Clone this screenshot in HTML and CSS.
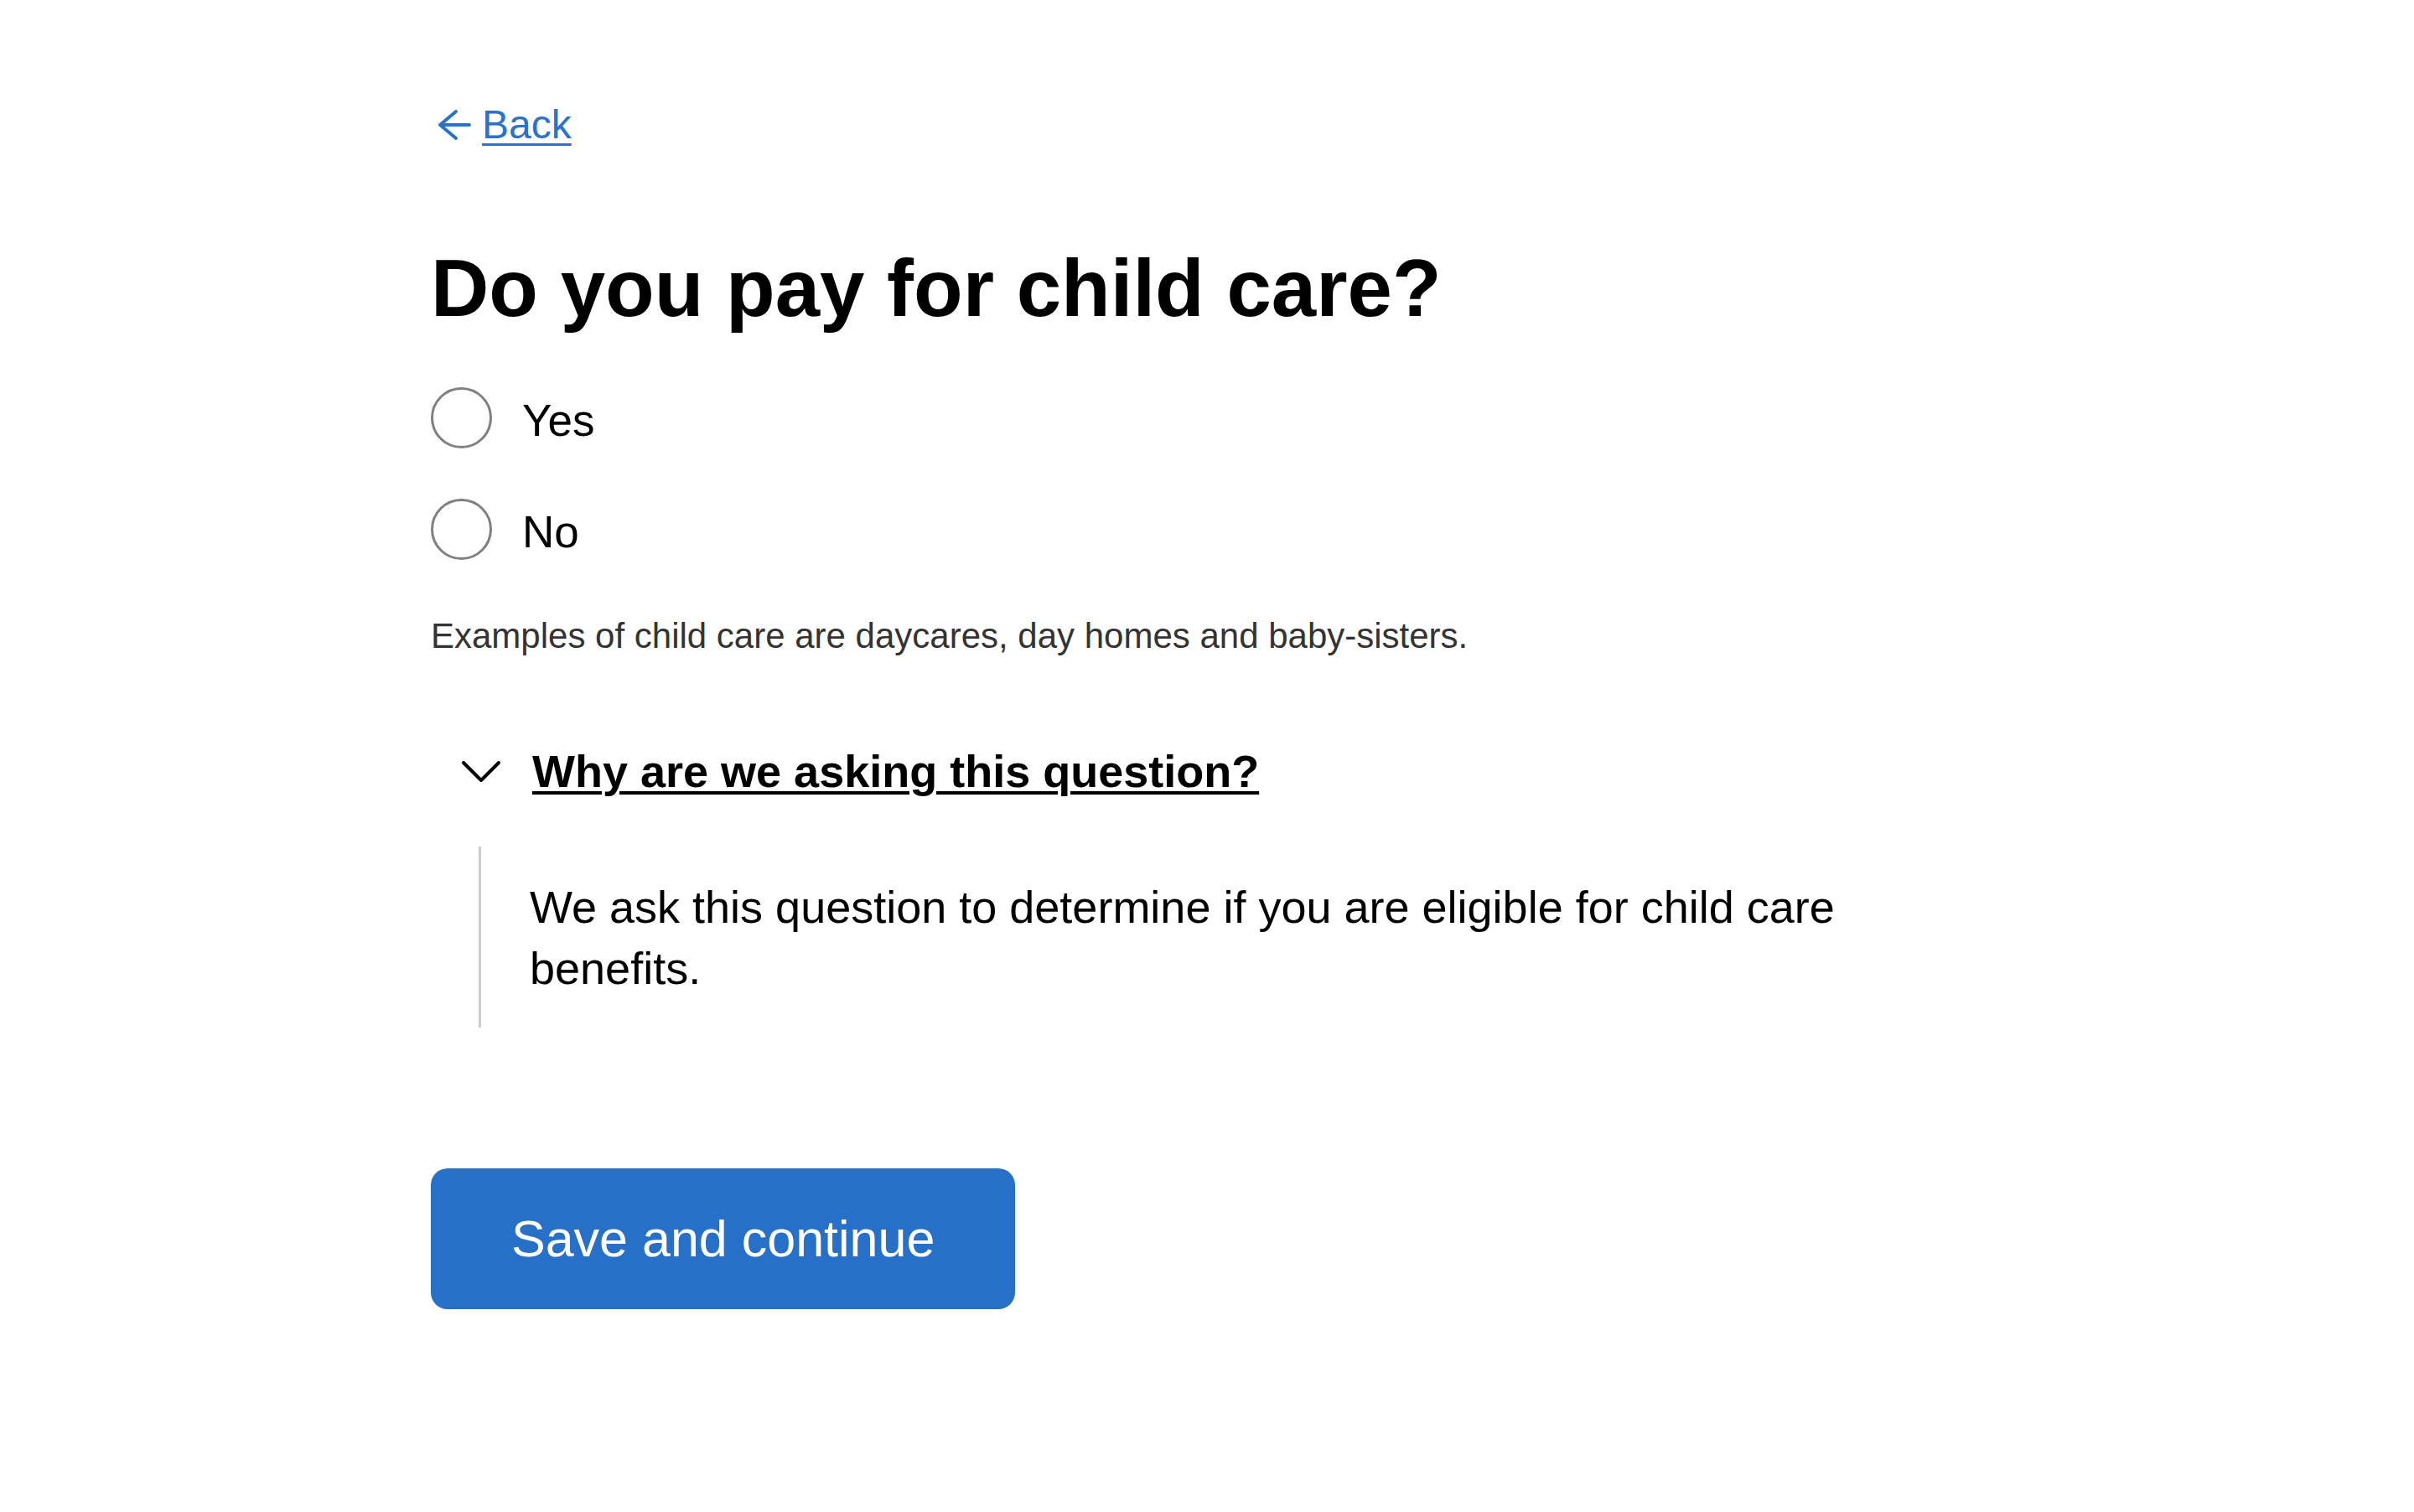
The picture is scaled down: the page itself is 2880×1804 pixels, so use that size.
FILE: index.html
```html
<!DOCTYPE html>
<html lang="en">
<head>
<meta charset="utf-8">
<title>Do you pay for child care?</title>
<link rel="stylesheet" href="styles.css">
</head>
<body>
<main class="page">
  <a class="back-link" href="#">
    <svg class="back-icon" width="48" height="48" viewBox="0 0 48 48" aria-hidden="true">
      <path d="M46 24 H11 M30 8 L11 24 L30 40" fill="none" stroke="currentColor" stroke-width="4" stroke-linecap="round" stroke-linejoin="round"/>
    </svg>
    <span class="back-text">Back</span>
  </a>

  <h1 class="question">Do you pay for child care?</h1>

  <div class="radios">
    <label class="radio-row">
      <input class="radio-input" type="radio" name="childcare" value="yes">
      <span class="radio-label">Yes</span>
    </label>
    <label class="radio-row">
      <input class="radio-input" type="radio" name="childcare" value="no">
      <span class="radio-label">No</span>
    </label>
  </div>

  <p class="hint">Examples of child care are daycares, day homes and baby-sisters.</p>

  <details class="why" open>
    <summary class="why-summary">
      <svg class="chevron" width="52" height="28" viewBox="0 0 52 28" aria-hidden="true">
        <path d="M5 4 L26 25 L47 4" fill="none" stroke="currentColor" stroke-width="4" stroke-linecap="round" stroke-linejoin="round"/>
      </svg>
      <span class="why-title">Why are we asking this question?</span>
    </summary>
    <div class="why-content">
      <p class="why-text">We ask this question to determine if you are eligible for child care benefits.</p>
    </div>
  </details>

  <button class="primary-btn" type="button">Save and continue</button>
</main>
</body>
</html>
```

FILE: styles.css
```css
html, body {
  margin: 0;
  padding: 0;
  background: #ffffff;
}

body {
  font-family: "Liberation Sans", Arial, Helvetica, sans-serif;
  color: #000000;
}

.page {
  box-sizing: content-box;
  width: 1758px;
  padding: 113px 0 0 514px;
  display: flex;
  flex-direction: column;
  align-items: flex-start;
}

.back-link {
  display: flex;
  align-items: center;
  gap: 13px;
  color: #2a72cc;
  text-decoration: none;
  font-size: 48px;
  line-height: 72px;
}

.back-icon {
  display: block;
  flex: none;
}

.back-text {
  text-decoration: underline;
  text-decoration-thickness: 3px;
  text-underline-offset: 6px;
}

.question {
  margin: 101px 0 0 0;
  font-size: 96px;
  line-height: 116px;
  font-weight: 700;
}

.radios {
  margin-top: 60px;
  display: flex;
  flex-direction: column;
  gap: 56px;
}

.radio-row {
  display: flex;
  align-items: flex-start;
  gap: 36px;
  cursor: pointer;
}

.radio-input {
  appearance: none;
  -webkit-appearance: none;
  margin: 0;
  width: 73px;
  height: 73px;
  box-sizing: border-box;
  border: 3px solid #808080;
  border-radius: 50%;
  background: #ffffff;
  flex: none;
}

.radio-label {
  padding-top: 3px;
  font-size: 53px;
  line-height: 74px;
}

.hint {
  margin: 58px 0 0 0;
  font-size: 42px;
  line-height: 58px;
  color: #333333;
}

.why {
  margin-top: 95px;
  width: 100%;
}

.why-summary {
  list-style: none;
  display: flex;
  align-items: center;
  gap: 35px;
  padding-left: 34px;
  cursor: pointer;
}

.why-summary::-webkit-details-marker {
  display: none;
}

.chevron {
  display: block;
  flex: none;
  color: #000000;
}

.why-title {
  font-size: 54px;
  line-height: 74px;
  font-weight: 700;
  text-decoration: underline;
  text-decoration-thickness: 4px;
  text-underline-offset: 5px;
}

.why-content {
  margin: 53px 0 0 57px;
  border-left: 3px solid #cccccc;
  padding: 36px 0 34px 58px;
}

.why-text {
  margin: 0;
  font-size: 54px;
  line-height: 73px;
}

.primary-btn {
  margin-top: 168px;
  height: 168px;
  padding: 0 96px;
  border: none;
  border-radius: 20px;
  background: #2770c9;
  color: #ffffff;
  font-family: "Liberation Sans", Arial, Helvetica, sans-serif;
  font-size: 61px;
  line-height: 168px;
  cursor: pointer;
}
```
